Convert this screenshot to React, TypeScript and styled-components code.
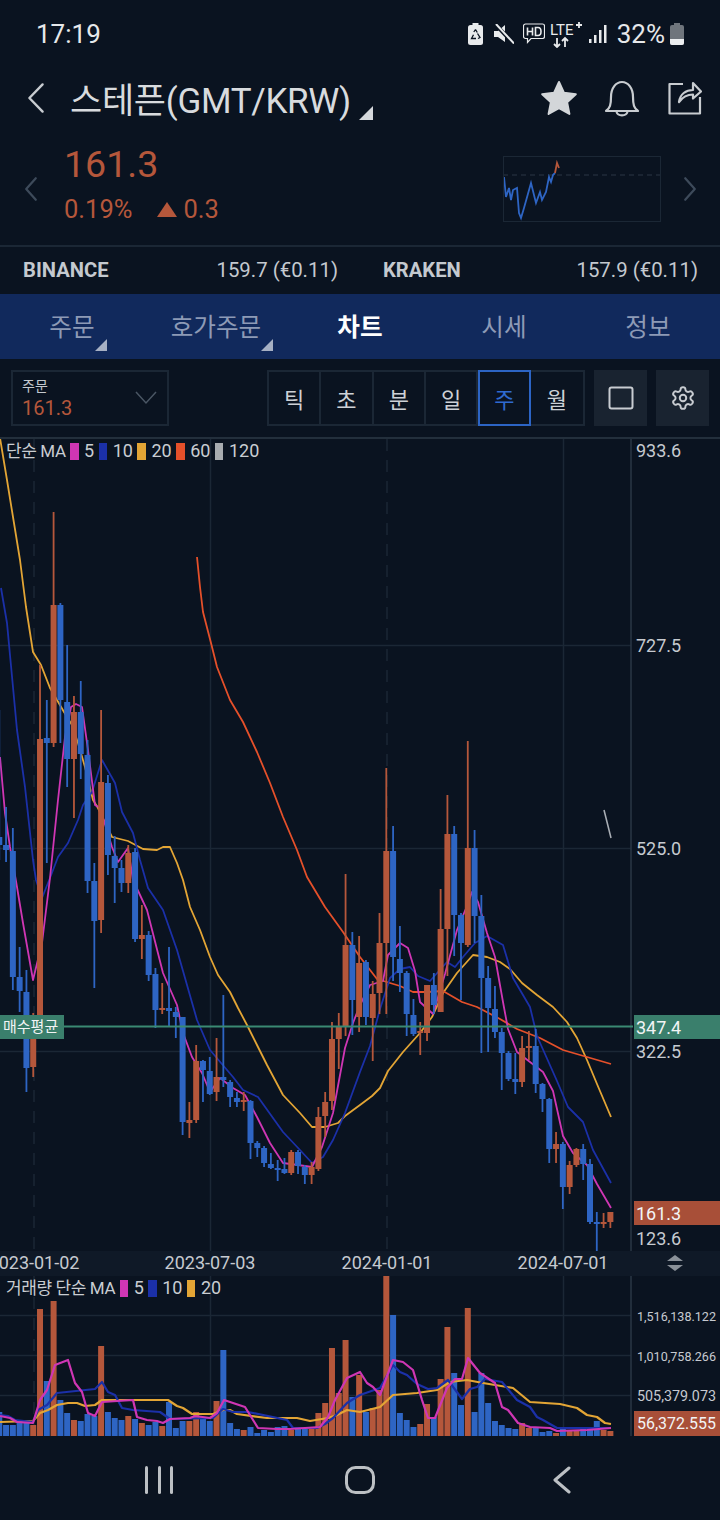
import styled, { createGlobalStyle } from 'styled-components';

const BG = '#0a1320';
const UP = '#b5573b';
const DOWN = '#2e65c4';
const GRID = '#1b2735';
const MA5 = '#cf36b4';
const MA10 = '#1b30a8';
const MA20 = '#e3a535';
const MA60 = '#e5502a';

const GlobalStyle = createGlobalStyle`
    html, body {
        margin: 0;
        padding: 0;
        background: ${BG};
    }
    body {
        font-family: Roboto, "Noto Sans CJK KR", sans-serif;
    }
`;

const Page = styled.div`
    width: 720px;
    height: 1520px;
    background: ${BG};
    display: flex;
    flex-direction: column;
    overflow: hidden;
`;

const StatusBar = styled.div`
    height: 60px;
    flex: none;
    padding: 7px 36px 0 36px;
    box-sizing: border-box;
    display: flex;
    align-items: center;
    justify-content: space-between;
    color: #e6e8ea;
    font-size: 26px;
`;

const StatusIcons = styled.div`
    display: flex;
    align-items: center;
`;

const Percent = styled.span`
    margin: 0 5px 0 10px;
`;

const Header = styled.div`
    height: 80px;
    flex: none;
    padding: 0 18px 4px 27px;
    box-sizing: border-box;
    display: flex;
    align-items: center;
`;

const Title = styled.div`
    margin: 0 0 2px 25px;
    font-size: 35px;
    letter-spacing: -0.3px;
    color: #d8dbde;
    flex: 1;
    display: flex;
    align-items: flex-end;
`;

const CornerMark = styled.i<{ $size: number; $color: string }>`
    display: block;
    width: 0;
    height: 0;
    border-style: solid;
    border-width: 0 0 ${({ $size }) => $size}px ${({ $size }) => $size}px;
    border-color: transparent transparent ${({ $color }) => $color} transparent;
`;

const TitleMark = styled(CornerMark)`
    margin: 0 0 3px 8px;
`;

const HeaderActions = styled.div`
    display: flex;
    align-items: center;
    gap: 27px;
`;

const BellSlot = styled.div`
    display: flex;
    margin: 0 1px 0 0;
`;

const Quote = styled.div`
    height: 107px;
    flex: none;
    padding: 0 23px 8px 24px;
    box-sizing: border-box;
    display: flex;
    align-items: center;
    border-bottom: 2px solid ${GRID};
`;

const QuoteValues = styled.div`
    flex: 1;
    margin: 0 0 10px 26px;
    color: ${UP};
`;

const QuotePrice = styled.div`
    font-size: 37.6px;
    line-height: 48px;
`;

const QuoteChange = styled.div`
    margin-top: 3px;
    font-size: 25.5px;
    line-height: 36px;
    display: flex;
    align-items: center;
`;

const ChangeArrow = styled.i`
    display: block;
    width: 0;
    height: 0;
    margin: 0 6px 0 25px;
    border-style: solid;
    border-width: 0 10px 15px 10px;
    border-color: transparent transparent ${UP} transparent;
`;

const MiniChart = styled.svg`
    display: block;
    margin-right: 22px;
    border: 1px solid ${GRID};
`;

const Exchanges = styled.div`
    height: 47px;
    flex: none;
    padding: 0 22px 2px 23px;
    box-sizing: border-box;
    display: grid;
    grid-template-columns: 315px 45px 315px;
    align-items: center;
    font-size: 20.4px;
    color: #c4c9cf;
`;

const Exchange = styled.div<{ $column: number }>`
    grid-column: ${({ $column }) => $column};
    display: flex;
    justify-content: space-between;
`;

const ExchangeName = styled.b`
    font-size: 20.2px;
    font-weight: 700;
`;

const Tabs = styled.div`
    height: 65px;
    flex: none;
    background: #11295c;
    display: grid;
    grid-template-columns: repeat(5, 1fr);
`;

const Tab = styled.div<{ $active?: boolean }>`
    position: relative;
    display: flex;
    align-items: center;
    justify-content: center;
    padding-bottom: 4px;
    box-sizing: border-box;
    font-size: 24.6px;
    font-weight: ${({ $active }) => ($active ? 700 : 400)};
    color: ${({ $active }) => ($active ? '#ffffff' : '#8d9ab6')};
`;

const TabLabel = styled.span`
    position: relative;
`;

const TabMark = styled(CornerMark)`
    position: absolute;
    right: -12px;
    bottom: -8px;
`;

const Toolbar = styled.div`
    height: 80px;
    flex: none;
    padding: 11px 11px 0 11px;
    box-sizing: border-box;
    display: flex;
    align-items: flex-start;
    border-bottom: 2px solid #232f3c;
`;

const OrderBox = styled.div`
    width: 158px;
    height: 56px;
    padding: 4px 10px 4px 9px;
    box-sizing: border-box;
    border: 2px solid ${GRID};
    display: flex;
    align-items: center;
    justify-content: space-between;
`;

const OrderLabel = styled.div`
    font-size: 14px;
    line-height: 19px;
    color: #c4c9cf;
`;

const OrderValue = styled.div`
    font-size: 20px;
    line-height: 24px;
    color: ${UP};
`;

const Intervals = styled.div`
    margin-left: 98px;
    width: 318px;
    display: grid;
    grid-template-columns: repeat(6, 1fr);
    border: 2px solid ${GRID};
    height: 56px;
    box-sizing: border-box;
`;

const Interval = styled.div<{ $active?: boolean }>`
    margin: ${({ $active }) => ($active ? '-2px 0' : '0')};
    box-sizing: border-box;
    display: flex;
    align-items: center;
    justify-content: center;
    font-size: 22px;
    color: ${({ $active }) => ($active ? '#2f6ad0' : '#cdd1d6')};
    border-right: ${({ $active }) => ($active ? 'none' : `2px solid ${GRID}`)};
    outline: ${({ $active }) => ($active ? '2px solid #2c64c4' : 'none')};
    outline-offset: -2px;
    &:last-child {
        border-right: none;
    }
`;

const SquareButton = styled.div`
    width: 53px;
    height: 56px;
    margin-left: 9px;
    background: #192330;
    display: flex;
    align-items: center;
    justify-content: center;
`;

const ChartPanel = styled.div`
    position: relative;
    height: 812px;
    flex: none;
`;

const ChartSvg = styled.svg`
    display: block;
    position: absolute;
    inset: 0;
`;

const Legend = styled.div`
    position: absolute;
    left: 6px;
    top: 0;
    display: flex;
    align-items: center;
    font-size: 18px;
    line-height: 24px;
    color: #c9cdd2;
`;

const LegendName = styled.span`
    font-size: 17px;
    letter-spacing: -0.4px;
`;

const LegendSwatch = styled.i<{ $color: string }>`
    display: block;
    width: 8.5px;
    height: 17px;
    background: ${({ $color }) => $color};
    margin: 0 5.5px 0 4.5px;
`;

const AxisText = styled.text`
    font-size: 18px;
    fill: #c6cad0;
`;

const VolumeAxisText = styled.text<{ $size: number }>`
    font-size: ${({ $size }) => $size}px;
    fill: #c6cad0;
`;

const TagText = styled.text<{ $size: number }>`
    font-size: ${({ $size }) => $size}px;
    fill: #f2f4f5;
`;

const DateAxis = styled.svg`
    display: block;
    flex: none;
    background: #0f1927;
`;

const DateText = styled.text`
    font-size: 18px;
    fill: #c6cad0;
    text-anchor: middle;
`;

const VolumePanel = styled.div`
    position: relative;
    height: 160px;
    flex: none;
`;

const NavBar = styled.div`
    height: 84px;
    flex: none;
    display: grid;
    grid-template-columns: 318px 84px 318px;
    align-items: center;
    padding-top: 4px;
    box-sizing: border-box;
`;

const NavItem = styled.div<{ $align: string }>`
    display: flex;
    justify-content: ${({ $align }) => $align};
`;

// [up, high, body top, body bottom, low], page coordinates
type Candle = [number, number, number, number, number];

const candles: Candle[] = [
    [0, 710, 837, 845, 860], [0, 807, 845, 850, 862], [0, 828, 851, 977, 990], [0, 947, 977, 991, 1012],
    [0, 970, 992, 1068, 1092], [1, 1013, 1027, 1067, 1077], [1, 665, 739, 1030, 1030], [0, 700, 738, 743, 863],
    [1, 512, 605, 743, 747], [0, 603, 605, 700, 743], [0, 645, 702, 759, 787], [1, 696, 712, 759, 818],
    [0, 681, 712, 754, 779], [0, 740, 755, 881, 893], [0, 863, 881, 921, 988], [1, 710, 782, 920, 933],
    [0, 775, 783, 855, 875], [0, 836, 856, 868, 903], [0, 860, 868, 883, 892], [1, 845, 853, 883, 893],
    [0, 848, 852, 939, 942], [1, 905, 935, 939, 959], [0, 931, 935, 975, 981], [0, 968, 974, 1010, 1028],
    [1, 983, 1008, 1010, 1014], [0, 947, 1008, 1011, 1027], [0, 1007, 1012, 1017, 1038], [0, 1017, 1017, 1122, 1135],
    [1, 1102, 1120, 1123, 1138], [1, 1045, 1061, 1120, 1123], [0, 1060, 1061, 1070, 1102], [0, 1057, 1071, 1094, 1095],
    [1, 1038, 1077, 1092, 1101], [0, 995, 1077, 1080, 1087], [0, 1080, 1082, 1097, 1107], [0, 1092, 1098, 1102, 1107],
    [1, 1092, 1100, 1101, 1111], [0, 1100, 1101, 1143, 1159], [0, 1141, 1143, 1148, 1157], [0, 1146, 1148, 1163, 1167],
    [0, 1153, 1164, 1168, 1169], [0, 1160, 1168, 1169, 1181], [0, 1158, 1169, 1173, 1174], [1, 1150, 1152, 1173, 1175],
    [0, 1150, 1152, 1166, 1174], [0, 1165, 1167, 1175, 1184], [1, 1162, 1167, 1175, 1184], [1, 1107, 1117, 1169, 1171],
    [1, 1092, 1102, 1116, 1137], [1, 1022, 1039, 1101, 1110], [1, 1013, 1027, 1039, 1069], [1, 874, 945, 1026, 1036],
    [0, 932, 945, 1000, 1035], [1, 936, 963, 1017, 1032], [0, 960, 962, 1017, 1025], [1, 981, 994, 1018, 1061],
    [1, 913, 943, 993, 1014], [1, 768, 851, 943, 1014], [0, 826, 851, 957, 981], [0, 926, 959, 973, 992],
    [0, 971, 973, 1014, 1036], [0, 999, 1015, 1034, 1036], [1, 1022, 1031, 1033, 1055], [1, 985, 985, 1033, 1041],
    [0, 973, 985, 1005, 1014], [1, 889, 929, 1012, 1012], [1, 795, 834, 929, 976], [0, 826, 834, 915, 956],
    [0, 913, 915, 943, 1000], [1, 741, 848, 945, 947], [0, 830, 848, 916, 943], [0, 895, 916, 978, 1053],
    [0, 966, 978, 1008, 1052], [0, 986, 1009, 1032, 1038], [0, 1028, 1032, 1053, 1090], [0, 1051, 1053, 1079, 1081],
    [0, 1053, 1079, 1082, 1094], [1, 1036, 1048, 1082, 1087], [1, 1031, 1046, 1048, 1060], [0, 1029, 1046, 1084, 1093],
    [0, 1083, 1084, 1099, 1112], [0, 1098, 1099, 1149, 1163], [1, 1132, 1144, 1149, 1163], [0, 1142, 1144, 1187, 1209],
    [1, 1161, 1165, 1187, 1194], [1, 1148, 1149, 1165, 1167], [0, 1144, 1149, 1164, 1180], [0, 1159, 1164, 1222, 1224],
    [0, 1212, 1222, 1224, 1251], [1, 1213, 1222, 1224, 1228], [1, 1212, 1212, 1222, 1228],
];

const volumeTops = [
    1412, 1425, 1425, 1423, 1422, 1425, 1309, 1381, 1301, 1400, 1413, 1420, 1421, 1414, 1416, 1346, 1412, 1418, 1420, 1416,
    1419, 1423, 1425, 1422, 1426, 1402, 1428, 1421, 1421, 1412, 1417, 1421, 1401, 1350, 1423, 1429, 1430, 1427, 1433, 1430,
    1432, 1427, 1426, 1430, 1428, 1429, 1427, 1413, 1403, 1348, 1393, 1340, 1397, 1375, 1412, 1408, 1390, 1276, 1315, 1413,
    1420, 1427, 1424, 1404, 1417, 1379, 1327, 1373, 1405, 1308, 1412, 1373, 1403, 1421, 1425, 1428, 1429, 1423, 1428, 1428,
    1432, 1431, 1433, 1427, 1430, 1430, 1429, 1427, 1421, 1430, 1431,
];

const candleX = (i: number) => 386.3 + (i - 57) * 6.79;

const priceMa5 = '0,757 5,813 10,847 17,887 23,923 33,980 42,943 50,878 58,800 65,737 71,707 76,704 82,707 88,750 95,805 100,808 112,847 118,862 128,848 133,880 147,910 163,973 177,1005 183,1033 192,1057 202,1073 210,1092 220,1078 233,1088 245,1095 257,1117 270,1143 283,1163 298,1165 312,1167 322,1147 333,1113 345,1048 353,1023 360,1005 370,985 383,981 388,955 400,943 408,948 415,971 420,1002 433,1014 445,974 457,930 467,906 472,892 478,902 487,933 495,957 503,1002 508,1029 517,1052 530,1062 543,1072 553,1091 563,1136 573,1153 587,1165 597,1184 611,1208';
const priceMa10 = '1,588 7,623 17,730 25,787 33,860 36,880 42,898 50,878 58,857 68,843 78,820 83,805 92,792 102,760 115,783 122,812 133,833 140,860 148,888 163,910 177,950 197,1020 210,1050 233,1077 243,1090 258,1097 283,1132 300,1150 312,1163 323,1157 333,1140 345,1113 360,1072 370,1046 380,1009 390,978 400,969 410,967 418,976 430,981 447,962 455,967 463,957 475,943 487,936 503,945 513,978 530,1007 537,1036 557,1081 568,1107 583,1122 593,1150 611,1183';
const priceMa20 = '0,438 7,480 13,517 20,560 26,607 33,652 41,665 50,688 57,700 64,712 72,725 78,743 85,767 93,800 98,808 105,823 112,837 128,841 143,849 157,850 163,847 170,847 177,863 183,880 190,907 200,930 210,957 218,975 230,992 238,1008 247,1025 257,1045 267,1065 283,1095 300,1113 312,1127 325,1127 338,1123 345,1116 360,1105 372,1096 380,1088 388,1071 403,1052 420,1033 432,1017 443,993 457,973 473,955 487,957 500,962 510,969 522,983 537,995 553,1007 567,1022 577,1038 587,1060 597,1084 611,1117';
const priceMa60 = '197,557 200,587 203,612 211,643 217,667 230,700 243,722 257,752 270,783 283,817 297,850 307,877 325,907 343,932 360,957 377,979 390,983 400,986 413,992 427,992 443,991 462,1002 477,1007 500,1019 517,1029 540,1038 563,1050 587,1057 611,1064';

const volumeMa5 = '0,1416 10,1418 17,1422 33,1423 40,1400 47,1390 55,1365 68,1360 75,1383 82,1392 88,1413 95,1416 102,1402 133,1400 137,1417 147,1420 157,1421 163,1423 170,1419 190,1418 195,1416 210,1418 217,1413 224,1400 245,1407 258,1428 277,1429 290,1429 320,1427 328,1417 335,1400 347,1378 360,1372 367,1383 373,1387 380,1395 393,1360 403,1362 413,1370 422,1400 428,1418 435,1418 447,1388 455,1379 462,1379 468,1358 480,1373 495,1383 502,1407 508,1410 518,1423 530,1427 550,1428 557,1431 587,1430 611,1428';
const volumeMa10 = '0,1415 8,1416 15,1420 33,1422 38,1410 47,1405 57,1393 95,1389 102,1382 108,1392 115,1395 122,1408 133,1410 160,1412 170,1419 213,1418 223,1409 233,1412 248,1412 287,1420 293,1428 317,1428 325,1424 333,1418 347,1403 360,1395 380,1388 393,1365 400,1372 407,1375 417,1384 428,1389 437,1388 448,1380 462,1399 470,1389 477,1387 485,1379 502,1382 517,1400 530,1407 537,1417 543,1420 557,1428 567,1428 611,1428';
const volumeMa20 = '0,1422 33,1421 40,1413 48,1410 57,1405 68,1403 77,1403 85,1406 95,1405 102,1400 168,1400 177,1406 183,1408 192,1414 213,1414 223,1410 230,1410 237,1414 267,1418 297,1418 310,1421 328,1418 337,1415 347,1410 360,1412 380,1407 393,1395 417,1393 437,1390 450,1382 467,1380 483,1383 513,1388 530,1402 560,1404 577,1408 587,1415 597,1417 605,1423 611,1424';

// mini chart, local to its box
const miniBlue = '1,21 3,41 6,32 8,44 10,34 14,32 16,57 18,62 21,52 28,27 33,47 37,36 39,44 43,36 46,21 48,26 50,19 52,17';
const miniRed = '52,17 54,7 56,12';

const Grid = ({ y1, y2, rows }: { y1: number; y2: number; rows: number[] }) => (
    <g stroke={GRID} strokeWidth={1.5}>
        {rows.map((y) => <line key={y} x1={0} x2={631} y1={y} y2={y} />)}
        <line x1={34} x2={34} y1={y1} y2={y2} strokeDasharray="12 9" />
        <line x1={210.5} x2={210.5} y1={y1} y2={y2} />
        <line x1={387} x2={387} y1={y1} y2={y2} strokeDasharray="12 9" />
        <line x1={563.5} x2={563.5} y1={y1} y2={y2} />
        <line x1={631} x2={631} y1={y1} y2={y2} stroke="#2a3745" />
    </g>
);

const MaLine = ({ points, color, width = 1.8 }: { points: string; color: string; width?: number }) => (
    <polyline points={points} fill="none" stroke={color} strokeWidth={width} strokeLinejoin="round" />
);

const Chevron = ({ dir, color, w, h, sw }: { dir: 'l' | 'r'; color: string; w: number; h: number; sw: number }) => (
    <svg width={w} height={h} viewBox={`0 0 ${w} ${h}`} fill="none" stroke={color} strokeWidth={sw} strokeLinecap="round" strokeLinejoin="round">
        <polyline points={dir === 'l' ? `${w - sw},${sw} ${sw},${h / 2} ${w - sw},${h - sw}` : `${sw},${sw} ${w - sw},${h / 2} ${sw},${h - sw}`} />
    </svg>
);

const RecycleBattery = () => (
    <svg width={15} height={22} viewBox="0 0 15 22" style={{ marginRight: 11 }}>
        <rect x={4.5} y={0} width={6} height={3} fill="#e8eaec" />
        <rect x={0} y={2} width={15} height={20} rx={2.5} fill="#e8eaec" />
        <path d="M7.5 6.5l1.800 3M9.500 10.500l2.500 4-2 1M8 15.500H3.500l2-3.800M5.800 9l1.700-2.500" fill="none" stroke={BG} strokeWidth={1.3} />
    </svg>
);

const MuteIcon = () => (
    <svg width={20} height={20} viewBox="0 0 20 20" style={{ marginRight: 9 }}>
        <path d="M0 7h4l7-6v17l-7-5H0z" fill="#e8eaec" />
        <path d="M2 1l17 18" stroke={BG} strokeWidth={4} />
        <path d="M2 0l18 19.500" stroke="#e8eaec" strokeWidth={2} />
    </svg>
);

const HdIcon = () => (
    <svg width={22} height={22} viewBox="0 0 22 22" style={{ marginRight: 5 }} fill="none" stroke="#e8eaec">
        <path d="M2.500 1h17a2 2 0 0 1 2 2v10.500a2 2 0 0 1-2 2H8l-3.500 4v-4h-2a2 2 0 0 1-2-2V3a2 2 0 0 1 2-2z" strokeWidth={1.2} />
        <path d="M4.500 4.500v8M9.500 4.500v8M4.500 8.500h5M12.500 4.500v8h2.500q3 0 3-4t-3-4z" strokeWidth={1.6} />
    </svg>
);

const LteIcon = () => (
    <svg width={32} height={28} viewBox="0 0 32 28" style={{ marginRight: 7 }}>
        <text x={0} y={15} fontSize={15} fill="#e8eaec" fontFamily="Roboto">LTE</text>
        <path d="M26 5h6M29 2v6" stroke="#e8eaec" strokeWidth={1.8} />
        <path d="M7 18v9M4 24l3 3 3-3M15 27v-9M12 21l3-3 3 3" stroke="#e8eaec" strokeWidth={1.8} fill="none" />
    </svg>
);

const SignalIcon = () => (
    <svg width={18} height={20} viewBox="0 0 18 20" fill="#e8eaec">
        <rect x={0} y={15} width={2.5} height={4} />
        <rect x={5} y={11} width={2.5} height={8} />
        <rect x={10} y={6} width={2.5} height={13} />
        <rect x={15} y={1} width={2.5} height={18} />
    </svg>
);

const BatteryIcon = () => (
    <svg width={14} height={22} viewBox="0 0 14 22">
        <rect x={4} y={0} width={6} height={3} fill="#6f757c" />
        <rect x={0} y={2} width={14} height={20} rx={2} fill="#6f757c" />
        <path d="M0 16h14v4a2 2 0 0 1-2 2H2a2 2 0 0 1-2-2z" fill="#eceef0" />
    </svg>
);

const StarIcon = () => (
    <svg width={36} height={36} viewBox="1 1 36 35">
        <path d="M19 2.500l5 10.800 11.800 1.500-8.700 8 2.300 11.600L19 28.600 8.600 34.400l2.300-11.600-8.700-8L14 13.300z" fill="#d3d6d9" stroke="#d3d6d9" strokeWidth={2} strokeLinejoin="round" />
    </svg>
);

const BellIcon = () => (
    <svg width={36} height={37} viewBox="0 0 36 37" fill="none" stroke="#c8ccd0" strokeWidth={2.2} strokeLinejoin="round">
        <path d="M2 31c4-3 5-6 5-14C7 8 12 2 18 2s11 6 11 15c0 8 1 11 5 14z" />
        <path d="M12.500 32c1.500 4.500 9.500 4.500 11 0" />
    </svg>
);

const ShareIcon = () => (
    <svg width={34} height={34} viewBox="0 0 34 34" fill="none" stroke="#c8ccd0" strokeWidth={2.2} strokeLinejoin="round">
        <path d="M15 3H1.500v29.500H32V16" />
        <path d="M11 21c1-8 7-12 14-12V2l8 8.500-8 7v-4c-6 0-10 2-14 7.500z" />
    </svg>
);

const GearIcon = () => (
    <svg width={26} height={26} viewBox="0 0 24 24" fill="none" stroke="#c8ccd1" strokeWidth={1.8} strokeLinejoin="round">
        <path d="M12.220 2h-.440a2 2 0 0 0-2 2v.180a2 2 0 0 1-1 1.730l-.430.250a2 2 0 0 1-2 0l-.150-.080a2 2 0 0 0-2.730.730l-.220.380a2 2 0 0 0 .730 2.730l.150.100a2 2 0 0 1 1 1.720v.510a2 2 0 0 1-1 1.740l-.150.090a2 2 0 0 0-.730 2.730l.220.380a2 2 0 0 0 2.730.730l.150-.080a2 2 0 0 1 2 0l.430.250a2 2 0 0 1 1 1.730V20a2 2 0 0 0 2 2h.440a2 2 0 0 0 2-2v-.180a2 2 0 0 1 1-1.730l.430-.250a2 2 0 0 1 2 0l.150.080a2 2 0 0 0 2.730-.730l.220-.390a2 2 0 0 0-.730-2.730l-.150-.080a2 2 0 0 1-1-1.740v-.500a2 2 0 0 1 1-1.740l.150-.090a2 2 0 0 0 .730-2.730l-.220-.380a2 2 0 0 0-2.730-.730l-.150.080a2 2 0 0 1-2 0l-.430-.250a2 2 0 0 1-1-1.730V4a2 2 0 0 0-2-2z" />
        <circle cx={12} cy={12} r={3} />
    </svg>
);

const intervals = ['틱', '초', '분', '일', '주', '월'];
const tabs = ['주문', '호가주문', '차트', '시세', '정보'];

export default function App() {
    return (
        <Page>
            <GlobalStyle />
            <StatusBar>
                <span>17:19</span>
                <StatusIcons>
                    <RecycleBattery />
                    <MuteIcon />
                    <HdIcon />
                    <LteIcon />
                    <SignalIcon />
                    <Percent>32%</Percent>
                    <BatteryIcon />
                </StatusIcons>
            </StatusBar>

            <Header>
                <Chevron dir="l" color="#c8ccd0" w={18} h={32} sw={2.4} />
                <Title>
                    스테픈(GMT/KRW)
                    <TitleMark $size={14} $color="#d5d8dc" />
                </Title>
                <HeaderActions>
                    <StarIcon />
                    <BellSlot>
                        <BellIcon />
                    </BellSlot>
                    <ShareIcon />
                </HeaderActions>
            </Header>

            <Quote>
                <Chevron dir="l" color="#3d4a5a" w={14} h={26} sw={2.2} />
                <QuoteValues>
                    <QuotePrice>161.3</QuotePrice>
                    <QuoteChange>
                        0.19%
                        <ChangeArrow />
                        0.3
                    </QuoteChange>
                </QuoteValues>
                <MiniChart width={156} height={64} viewBox="1 1 156 64">
                    <line x1={0} x2={158} y1={19} y2={19} stroke="#2a3644" strokeDasharray="5 4" />
                    <polyline points={miniBlue} fill="none" stroke={DOWN} strokeWidth={1.8} />
                    <polyline points={miniRed} fill="none" stroke={UP} strokeWidth={1.8} />
                </MiniChart>
                <Chevron dir="r" color="#3d4a5a" w={14} h={26} sw={2.2} />
            </Quote>

            <Exchanges>
                <Exchange $column={1}>
                    <ExchangeName>BINANCE</ExchangeName>
                    <span>159.7 (€0.11)</span>
                </Exchange>
                <Exchange $column={3}>
                    <ExchangeName>KRAKEN</ExchangeName>
                    <span>157.9 (€0.11)</span>
                </Exchange>
            </Exchanges>

            <Tabs>
                {tabs.map((tab, i) => (
                    <Tab key={tab} $active={tab === '차트'}>
                        <TabLabel>
                            {tab}
                            {i < 2 && <TabMark $size={12} $color="#a6b0c4" />}
                        </TabLabel>
                    </Tab>
                ))}
            </Tabs>

            <Toolbar>
                <OrderBox>
                    <div>
                        <OrderLabel>주문</OrderLabel>
                        <OrderValue>161.3</OrderValue>
                    </div>
                    <svg width={22} height={14} viewBox="0 0 22 14" fill="none" stroke="#4a5664" strokeWidth={1.5}>
                        <polyline points="1,1 11,12 21,1" />
                    </svg>
                </OrderBox>
                <Intervals>
                    {intervals.map((label) => (
                        <Interval key={label} $active={label === '주'}>{label}</Interval>
                    ))}
                </Intervals>
                <SquareButton>
                    <svg width={26} height={24} viewBox="0 0 26 24" fill="none" stroke="#c8ccd1" strokeWidth={2}>
                        <rect x={1.5} y={1.5} width={23} height={21} rx={2} />
                    </svg>
                </SquareButton>
                <SquareButton>
                    <GearIcon />
                </SquareButton>
            </Toolbar>

            <ChartPanel>
                <ChartSvg width={720} height={812} viewBox="0 439 720 812">
                    <Grid y1={439} y2={1251} rows={[645.5, 848.5, 1051.5]} />
                    <MaLine points={priceMa20} color={MA20} />
                    <MaLine points={priceMa60} color={MA60} />
                    <MaLine points={priceMa10} color={MA10} />
                    <MaLine points={priceMa5} color={MA5} />
                    {candles.map(([up, high, top, bottom, low], i) => (
                        <g key={i} fill={up ? UP : DOWN}>
                            <rect x={candleX(i) - 0.9} y={high} width={1.8} height={low - high} />
                            <rect x={candleX(i) - 3} y={top} width={6} height={Math.max(bottom - top, 2)} />
                        </g>
                    ))}
                    <line x1={604} y1={810} x2={611} y2={838} stroke="#a9aeb4" strokeWidth={1.6} />
                    <line x1={0} x2={633} y1={1026.5} y2={1026.5} stroke="#3a8a73" strokeWidth={2} />

                    <rect x={0} y={1015} width={64} height={24} fill="#3a7f6c" />
                    <TagText $size={15} x={3} y={1032}>매수평균</TagText>

                    <AxisText x={636} y={457}>933.6</AxisText>
                    <AxisText x={636} y={652}>727.5</AxisText>
                    <AxisText x={636} y={855}>525.0</AxisText>
                    <rect x={634} y={1015} width={86} height={24} fill="#3a7f6c" />
                    <TagText $size={18} x={636} y={1033.5}>347.4</TagText>
                    <AxisText x={636} y={1058}>322.5</AxisText>
                    <rect x={634} y={1201} width={86} height={24} fill="#a84f38" />
                    <TagText $size={18} x={636} y={1219.5}>161.3</TagText>
                    <AxisText x={636} y={1244.5}>123.6</AxisText>
                </ChartSvg>
                <Legend>
                    <LegendName>단순 MA</LegendName>
                    <LegendSwatch $color={MA5} />5
                    <LegendSwatch $color={MA10} />10
                    <LegendSwatch $color={MA20} />20
                    <LegendSwatch $color={MA60} />60
                    <LegendSwatch $color="#a8acb0" />120
                </Legend>
            </ChartPanel>

            <DateAxis width={720} height={25} viewBox="0 1251 720 25">
                <DateText x={34} y={1269}>2023-01-02</DateText>
                <DateText x={210} y={1269}>2023-07-03</DateText>
                <DateText x={387} y={1269}>2024-01-01</DateText>
                <DateText x={563} y={1269}>2024-07-01</DateText>
                <path d="M675 1255l8 6h-16zM675 1271l8-6h-16z" fill="#8a9199" />
            </DateAxis>

            <VolumePanel>
                <ChartSvg width={720} height={160} viewBox="0 1276 720 160">
                    <Grid y1={1276} y2={1436} rows={[1315.5, 1355.5, 1395.5]} />
                    {volumeTops.map((top, i) => (
                        <rect key={i} x={candleX(i) - 3} y={top} width={6} height={1436 - top} fill={candles[i][0] ? UP : DOWN} />
                    ))}
                    <MaLine points={volumeMa20} color={MA20} width={2.2} />
                    <MaLine points={volumeMa10} color={MA10} width={2.2} />
                    <MaLine points={volumeMa5} color={MA5} width={2.2} />

                    <VolumeAxisText $size={13.2} x={637} y={1320.5} textLength={79} lengthAdjust="spacingAndGlyphs">1,516,138.122</VolumeAxisText>
                    <VolumeAxisText $size={13.2} x={637} y={1360.5} textLength={79} lengthAdjust="spacingAndGlyphs">1,010,758.266</VolumeAxisText>
                    <VolumeAxisText $size={15} x={637} y={1401} textLength={79} lengthAdjust="spacingAndGlyphs">505,379.073</VolumeAxisText>
                    <rect x={634} y={1411} width={86} height={25} fill="#a84f38" />
                    <TagText $size={16} x={637} y={1429} textLength={79} lengthAdjust="spacingAndGlyphs">56,372.555</TagText>
                </ChartSvg>
                <Legend>
                    <LegendName>거래량 단순 MA</LegendName>
                    <LegendSwatch $color={MA5} />5
                    <LegendSwatch $color={MA10} />10
                    <LegendSwatch $color={MA20} />20
                </Legend>
            </VolumePanel>

            <NavBar>
                <NavItem $align="flex-end">
                    <svg width={28} height={28} viewBox="0 0 28 28" fill="#bcc0c4" style={{ marginRight: 145 }}>
                        <rect x={0} y={0} width={3} height={28} rx={1.5} />
                        <rect x={13} y={0} width={3} height={28} rx={1.5} />
                        <rect x={25} y={0} width={3} height={28} rx={1.5} />
                    </svg>
                </NavItem>
                <NavItem $align="center">
                    <svg width={30} height={28} viewBox="0 0 30 28" fill="none" stroke="#bcc0c4" strokeWidth={3}>
                        <rect x={1.5} y={1.5} width={27} height={25} rx={9} />
                    </svg>
                </NavItem>
                <NavItem $align="flex-start">
                    <svg width={18} height={28} viewBox="0 0 18 28" fill="none" stroke="#bcc0c4" strokeWidth={3} strokeLinecap="round" strokeLinejoin="round" style={{ marginLeft: 151 }}>
                        <polyline points="16,2 2,14 16,26" />
                    </svg>
                </NavItem>
            </NavBar>
        </Page>
    );
}
